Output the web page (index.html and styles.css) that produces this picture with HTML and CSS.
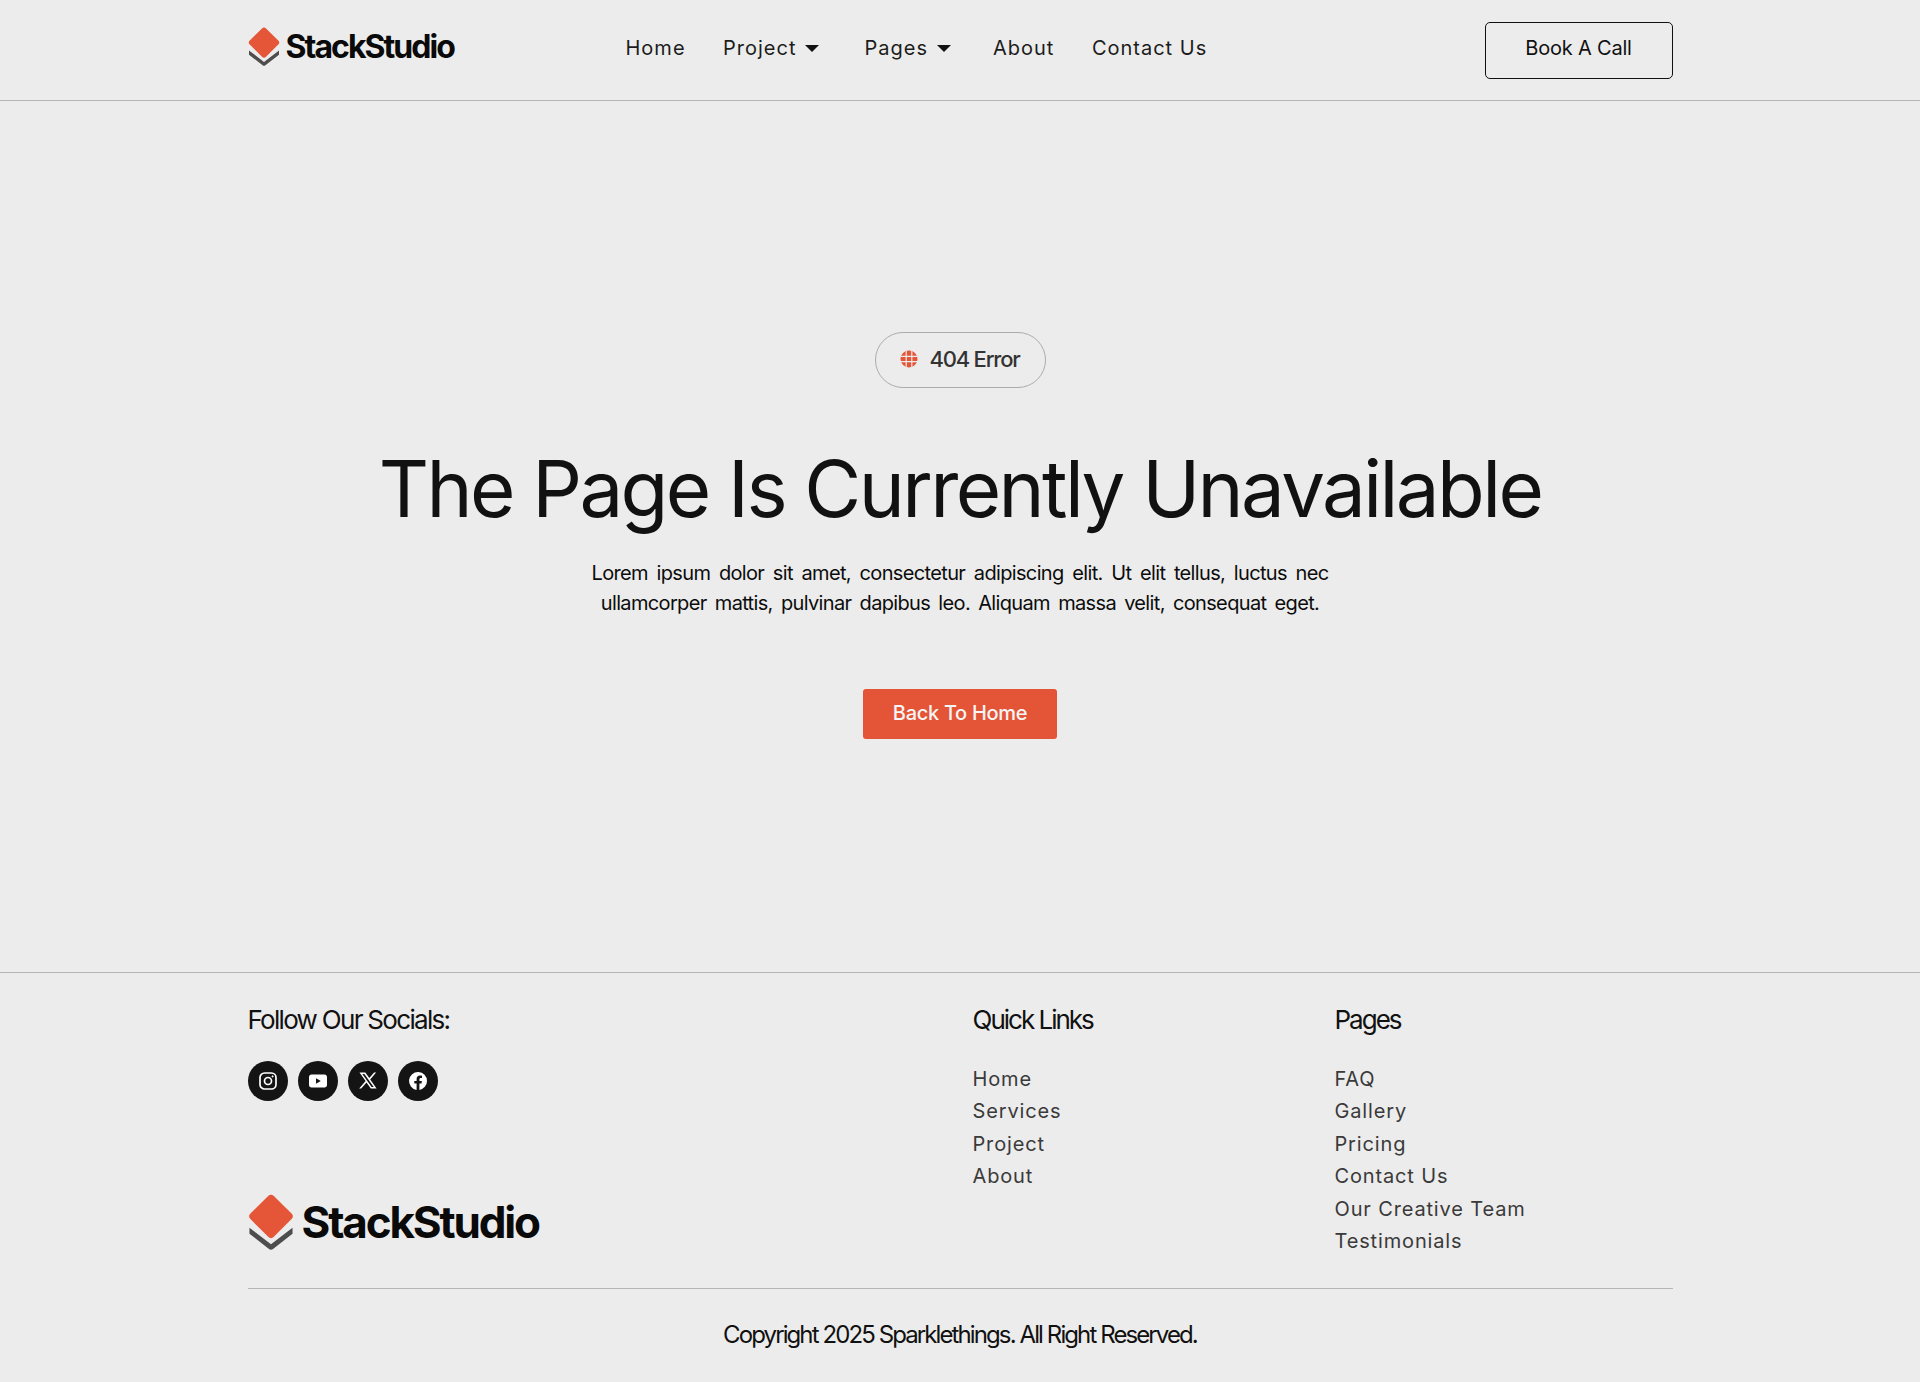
FILE: index.html
```html
<!DOCTYPE html>
<html lang="en">
<head>
  <meta charset="UTF-8" />
  <meta name="viewport" content="width=device-width, initial-scale=1.0"/>
  <title>StackStudio - 404</title>
  <link rel="stylesheet" href="styles.css">
</head>
<body>
  <header class="topbar">
    <div class="wrap topbar-inner">
      <a class="logo" href="#">
        <svg class="logo-mark" viewBox="0 0 32 39" aria-hidden="true">
          <path d="M1 23.5v4.2l13.6 10.6c.9.7 1.9.7 2.8 0L31 27.700v-4.200L16 35z" fill="#4d4d4d"/>
          <path d="M14.200 1.200c1-1 2.600-1 3.600 0l12.700 12.600c1 1 1 2.500 0 3.500L17.800 30c-1 1-2.600 1-3.600 0L1.500 17.300c-1-1-1-2.500 0-3.500z" fill="#e55537"/>
        </svg>
        <span>StackStudio</span>
      </a>
      <nav class="menu">
        <a href="#">Home</a>
        <a href="#" class="has-caret wide">Project</a>
        <a href="#" class="has-caret">Pages</a>
        <a href="#">About</a>
        <a href="#">Contact Us</a>
      </nav>
      <a class="call-btn" href="#">Book A Call</a>
    </div>
  </header>

  <main class="hero">
    <div class="pill">
      <svg class="globe" viewBox="0 0 18 18" aria-hidden="true">
        <circle cx="9" cy="9" r="8.500" fill="#e55537"/>
        <path d="M.5 6.300h17M.5 11.700h17M6.200 .8v16.400M11.800 .8v16.400" stroke="#ececec" stroke-width="1.200" fill="none"/>
      </svg>
      <span>404 Error</span>
    </div>
    <h1>The Page Is Currently Unavailable</h1>
    <p class="lead">Lorem ipsum dolor sit amet, consectetur adipiscing elit. Ut elit tellus, luctus nec ullamcorper mattis, pulvinar dapibus leo. Aliquam massa velit, consequat eget.</p>
    <a class="home-btn" href="#">Back To Home</a>
  </main>

  <footer class="foot">
    <div class="wrap foot-top">
      <div class="foot-brand">
        <h4>Follow Our Socials:</h4>
        <div class="socials">
          <a href="#" aria-label="Instagram">
            <svg viewBox="0 0 20 20" width="20" height="20" fill="none" stroke="#fff" stroke-width="1.700">
              <rect x="2" y="2" width="16" height="16" rx="4.500"/>
              <circle cx="10" cy="10" r="3.500"/>
              <circle cx="14.600" cy="5.400" r=".6" fill="#fff" stroke-width="1"/>
            </svg>
          </a>
          <a href="#" aria-label="YouTube">
            <svg viewBox="0 0 20 20" width="20" height="20">
              <path fill-rule="evenodd" fill="#fff" d="M3.500 3.600h13c1.400 0 2.500 1.100 2.500 2.500v7.800c0 1.400-1.100 2.500-2.500 2.500h-13C2.100 16.400 1 15.300 1 13.900V6.100c0-1.400 1.100-2.500 2.500-2.500zM8 7.200v5.600l4.800-2.800z"/>
            </svg>
          </a>
          <a href="#" aria-label="X">
            <svg viewBox="0 0 20 20" width="20" height="20">
              <path fill-rule="evenodd" fill="#fff" d="M1.500 1.500h5.800l4 5.600 4.800-5.600h2l-5.900 6.900 6.400 9.100h-5.800l-4.300-6.100-5.300 6.100h-2l6.400-7.400zM4.300 3l9.300 13h2.100L6.400 3z"/>
            </svg>
          </a>
          <a href="#" aria-label="Facebook">
            <svg viewBox="0 0 20 20" width="20" height="20">
              <path fill="#fff" d="M19 10a9 9 0 1 0-10.400 8.900v-6.300H6.300V10h2.300V8c0-2.300 1.300-3.500 3.400-3.500 1 0 2 .2 2 .2v2.200h-1.100c-1.100 0-1.500.7-1.500 1.400V10h2.500l-.4 2.600h-2.100v6.300A9 9 0 0 0 19 10z"/>
            </svg>
          </a>
        </div>
        <a class="logo logo-big" href="#">
          <svg class="logo-mark" viewBox="0 0 32 39" aria-hidden="true">
            <path d="M1 23.5v4.2l13.6 10.600c.9.7 1.900.7 2.800 0L31 27.700v-4.200L16 35z" fill="#4d4d4d"/>
            <path d="M14.200 1.200c1-1 2.600-1 3.600 0l12.700 12.600c1 1 1 2.500 0 3.500L17.800 30c-1 1-2.600 1-3.600 0L1.500 17.300c-1-1-1-2.500 0-3.500z" fill="#e55537"/>
          </svg>
          <span>StackStudio</span>
        </a>
      </div>
      <div class="foot-col">
        <h4>Quick Links</h4>
        <ul>
          <li><a href="#">Home</a></li>
          <li><a href="#">Services</a></li>
          <li><a href="#">Project</a></li>
          <li><a href="#">About</a></li>
        </ul>
      </div>
      <div class="foot-col">
        <h4>Pages</h4>
        <ul>
          <li><a href="#">FAQ</a></li>
          <li><a href="#">Gallery</a></li>
          <li><a href="#">Pricing</a></li>
          <li><a href="#">Contact Us</a></li>
          <li><a href="#">Our Creative Team</a></li>
          <li><a href="#">Testimonials</a></li>
        </ul>
      </div>
    </div>
    <div class="wrap">
      <p class="copy">Copyright 2025 Sparklethings. All Right Reserved.</p>
    </div>
  </footer>
</body>
</html>
```

FILE: styles.css
```css
* { margin: 0; padding: 0; box-sizing: border-box; }
body {
  background: #ececec;
  color: #111;
  font-family: "Inter", "Liberation Sans", sans-serif;
}
a { color: inherit; text-decoration: none; }
ul { list-style: none; }
.wrap { width: 1425px; margin: 0 auto; }

.topbar { height: 101px; border-bottom: 1px solid #b5b5b5; }
.topbar-inner { display: flex; align-items: flex-start; height: 100%; }

.logo { display: flex; align-items: center; gap: 6px; font-weight: 700; color: #0a0a0a; }
.logo-mark { width: 32px; height: 39px; flex: none; }
.topbar .logo { margin-top: 27px; font-size: 32px; letter-spacing: -1.950px; line-height: 39px; width: 236px; }

.menu { display: flex; margin-top: 35px; margin-left: 142px; font-size: 20px; line-height: 26px; letter-spacing: 1px; color: #1c1c1c; }
.menu a { margin-right: 37.500px; }
.menu a.has-caret { margin-right: 42px; }
.menu a.wide { margin-right: 45px; }
.has-caret::after {
  content: "";
  display: inline-block;
  margin-left: 9px;
  vertical-align: 3px;
  border-left: 7px solid transparent;
  border-right: 7px solid transparent;
  border-top: 7px solid #111;
}

.call-btn {
  margin-left: auto;
  margin-top: 22px;
  width: 188px;
  height: 57px;
  padding-bottom: 6px;
  display: flex;
  align-items: center;
  justify-content: center;
  border: 1.500px solid #111;
  border-radius: 5px;
  font-size: 20px;
  letter-spacing: -.2px;
}

.hero { height: 871px; display: flex; flex-direction: column; align-items: center; padding-top: 231px; }
.pill {
  width: 171px;
  height: 56px;
  padding-bottom: 3px;
  display: flex;
  align-items: center;
  justify-content: center;
  gap: 11px;
  border: 1px solid #ababab;
  border-radius: 28px;
  font-size: 22px;
  font-weight: 500;
  letter-spacing: -1.200px;
  color: #333;
}
.globe { width: 18px; height: 18px; }
.hero h1 {
  margin-top: 53px;
  font-size: 78px;
  font-weight: 400;
  line-height: 96px;
  letter-spacing: -2.600px;
  color: #111;
  white-space: nowrap;
}
.lead {
  margin-top: 21px;
  width: 737px;
  font-size: 20px;
  line-height: 30px;
  letter-spacing: -.65px;
  word-spacing: 3.200px;
  text-align: justify;
  text-align-last: center;
  color: #0c0c0c;
}
.home-btn {
  margin-top: 71px;
  width: 194px;
  height: 50px;
  padding-bottom: 3px;
  display: flex;
  align-items: center;
  justify-content: center;
  background: #e45436;
  border-radius: 3px;
  color: #f5f5f5;
  font-size: 20px;
  font-weight: 500;
  letter-spacing: -.3px;
}

.foot { border-top: 1px solid #b5b5b5; height: 410px; }
.foot-top { display: flex; height: 316px; border-bottom: 1px solid #b5b5b5; padding-top: 31px; }
.foot h4 { font-size: 26px; line-height: 32px; font-weight: 400; letter-spacing: -1.700px; color: #111; }
.foot-col h4 { letter-spacing: -2px; }
.foot-brand { flex: 0 0 725px; display: flex; flex-direction: column; }
.socials { display: flex; gap: 10px; margin-top: 25px; }
.socials a { width: 40px; height: 40px; border-radius: 50%; background: #141414; display: flex; align-items: center; justify-content: center; }
.logo-big { margin-top: 93px; gap: 8px; font-size: 44px; letter-spacing: -2.150px; line-height: 56px; }
.logo-big .logo-mark { width: 46px; height: 56px; }
.foot-col { flex: 0 0 362px; }
.foot-col + .foot-col { flex: 1; }
.foot-col ul { margin-top: 27px; }
.foot-col li { font-size: 20px; line-height: 32.400px; letter-spacing: .85px; color: #3a3a3a; }
.copy { text-align: center; margin-top: 30px; font-size: 24px; line-height: 32px; letter-spacing: -1.900px; color: #111; }
```
